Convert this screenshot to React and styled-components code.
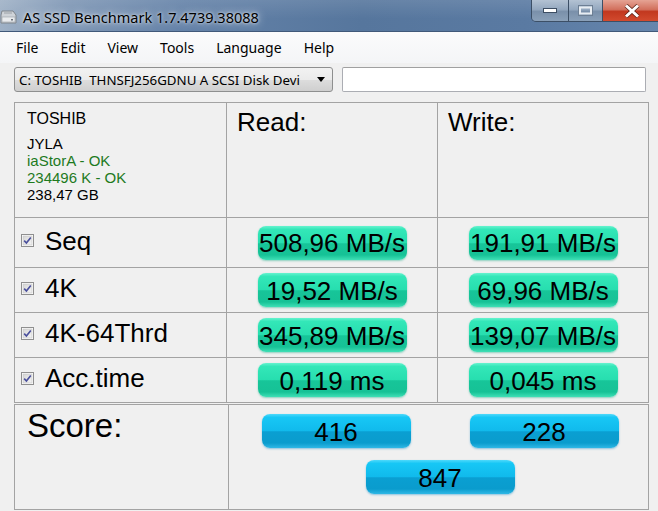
import React from "react";
import styled, { createGlobalStyle } from "styled-components";

const GlobalStyle = createGlobalStyle`
  html, body {
    margin: 0;
    padding: 0;
    overflow: hidden;
    background: #f0f0f0;
  }
`;

const Window = styled.div`
  width: 658px;
  height: 511px;
  display: flex;
  flex-direction: column;
  background: #f0f0f0;
  overflow: hidden;
  font-family: "Liberation Sans", Arial, sans-serif;
  color: #000;
`;

const TitleBar = styled.div`
  height: 31px;
  display: flex;
  align-items: center;
  background:
    linear-gradient(180deg, rgba(255, 255, 255, 0.1), rgba(255, 255, 255, 0) 60%),
    linear-gradient(90deg, #9fb1c6 0%, #7f97b5 10%, #6482a8 28%, #56769d 55%, #5a7aa2 80%, #6686ad 100%);
  border-bottom: 1px solid #41597a;
`;

const AppIcon = styled.svg`
  width: 17px;
  height: 16px;
  margin: 2px 6px 0 0;
  flex: none;
`;

const Title = styled.span`
  font-family: "Noto Sans", sans-serif;
  font-size: 14.5px;
  color: #000;
  text-shadow: 0 0 8px rgba(255, 255, 255, 0.9), 0 0 3px rgba(255, 255, 255, 0.8);
  margin-top: 2px;
`;

const WindowButtons = styled.div`
  margin-left: auto;
  align-self: flex-start;
  display: flex;
  height: 21px;
  border: 1px solid #3c4f66;
  border-top: none;
  border-radius: 0 0 0 5px;
  overflow: hidden;
  margin-right: -4px;
`;

const WinButton = styled.div`
  width: ${(p) => p.$w}px;
  display: flex;
  align-items: center;
  justify-content: center;
  border-left: ${(p) => (p.$first ? "none" : "1px solid #3c4f66")};
  background: ${(p) =>
    p.$close
      ? "linear-gradient(180deg, #e5a394 0%, #d2705d 45%, #c2381f 55%, #d24a2e 100%)"
      : "linear-gradient(180deg, #b3c2d3 0%, #94a8bf 45%, #7a90aa 55%, #8aa0b8 100%)"};
`;

const MenuBar = styled.div`
  height: 31px;
  display: flex;
  align-items: center;
  padding-left: 9px;
  background: linear-gradient(180deg, #fbfbfc, #f4f5f7);
  font-family: "Noto Sans", sans-serif;
  font-size: 14px;
`;

const MenuItem = styled.span`
  padding: 0 7px;
  margin-right: 8px;
`;

const DriveRow = styled.div`
  display: flex;
  gap: 9px;
  padding: 4px 0 0 14px;
`;

const Combo = styled.div`
  width: 313px;
  height: 23px;
  display: flex;
  align-items: center;
  border: 1px solid #8e8f8f;
  border-radius: 3px;
  background: linear-gradient(180deg, #f2f2f2 0%, #ebebeb 50%, #dddddd 51%, #cfcfcf 100%);
  font-family: "Noto Sans", sans-serif;
  font-size: 13.3px;
  white-space: pre;
  padding-left: 4px;
`;

const ComboText = styled.span`
  flex: 1;
  overflow: hidden;
`;

const ComboArrow = styled.span`
  width: 0;
  height: 0;
  border-left: 4px solid transparent;
  border-right: 4px solid transparent;
  border-top: 5px solid #000;
  margin: 0 7px 0 6px;
`;

const TextBox = styled.div`
  width: 302px;
  height: 23px;
  border: 1px solid #abadb3;
  border-top-color: #a0a0a0;
  border-radius: 2px;
  background: #fff;
`;

const ResultGrid = styled.div`
  margin: 10px 0 0 14px;
  display: grid;
  grid-template-columns: 211px 210px 210px;
  grid-template-rows: 114px 49px 44px 44px 44px;
  gap: 1px;
  width: max-content;
  background: #a3a3a3;
  border: 1px solid #a3a3a3;
`;

const Cell = styled.div`
  background: #f0f0f0;
`;

const InfoCell = styled(Cell)`
  padding: 7px 0 0 12px;
  font-size: 15px;
  line-height: 17px;
`;

const DriveName = styled.div`
  font-size: 16px;
  line-height: 18px;
  margin-bottom: 7px;
`;

const InfoLine = styled.div`
  color: ${(p) => (p.$ok ? "#1e7a1e" : "#000")};
`;

const HeadCell = styled(Cell)`
  padding: 4px 0 0 10px;
  font-size: 26px;
`;

const LabelCell = styled(Cell)`
  display: flex;
  align-items: center;
  gap: 11px;
  padding: 0 0 3px 6px;
  font-size: 26px;
`;

const CheckBox = styled.svg`
  width: 13px;
  height: 13px;
  flex: none;
  margin-top: -1px;
`;

const ValueCell = styled(Cell)`
  display: flex;
  align-items: center;
  justify-content: center;
`;

const Pill = styled.div`
  width: 149px;
  height: 34px;
  box-sizing: border-box;
  padding-top: 2px;
  border-radius: 8px;
  display: flex;
  align-items: center;
  justify-content: center;
  white-space: nowrap;
  font-size: 26px;
  background: ${(p) =>
    p.$blue
      ? "linear-gradient(180deg, #4fd9fb 0%, #17c7f5 10%, #10baec 50%, #0a9fd2 52%, #0a9ccd 85%, #2fb8e6 100%)"
      : "linear-gradient(180deg, #66f3cf 0%, #33e7b8 10%, #27deaf 50%, #17c599 52%, #16c296 85%, #3fe0b6 100%)"};
  box-shadow: ${(p) =>
    p.$blue ? "0 1px 2px rgba(20, 140, 200, 0.45)" : "0 1px 2px rgba(20, 170, 130, 0.45)"};
`;

const ScoreBox = styled.div`
  margin: 1px 0 0 14px;
  display: grid;
  grid-template-columns: 213px 419px;
  grid-template-rows: 104px;
  gap: 1px;
  width: max-content;
  background: #a3a3a3;
  border: 1px solid #a3a3a3;
`;

const ScoreLabel = styled(Cell)`
  padding: 2px 0 0 12px;
  font-size: 33px;
`;

const ScoreValues = styled(Cell)`
  display: grid;
  grid-template-columns: 1fr 1fr;
  justify-items: center;
  align-content: start;
  row-gap: 12px;
  padding: 9px 0 0 3px;
`;

const TotalSlot = styled.div`
  grid-column: 1 / -1;
`;

const rows = [
  { name: "Seq", read: "508,96 MB/s", write: "191,91 MB/s" },
  { name: "4K", read: "19,52 MB/s", write: "69,96 MB/s" },
  { name: "4K-64Thrd", read: "345,89 MB/s", write: "139,07 MB/s" },
  { name: "Acc.time", read: "0,119 ms", write: "0,045 ms" },
];

const menu = ["File", "Edit", "View", "Tools", "Language", "Help"];

const Check = () => (
  <CheckBox viewBox="0 0 13 13">
    <defs>
      <linearGradient id="cbg" x1="0" y1="0" x2="1" y2="1">
        <stop offset="0" stopColor="#d6d6d6" />
        <stop offset="1" stopColor="#f4f4f4" />
      </linearGradient>
    </defs>
    <rect x="0.5" y="0.5" width="12" height="12" fill="#fff" stroke="#8f8f8f" />
    <rect x="2" y="2" width="9" height="9" fill="url(#cbg)" stroke="#c4c4c4" strokeWidth="0.6" />
    <path d="M3.2 6.6 L5.4 9 L9.8 3.4" fill="none" stroke="#4a4f9c" strokeWidth="1.6" />
  </CheckBox>
);

export default function App() {
  return (
    <>
      <GlobalStyle />
      <Window>
        <TitleBar>
          <AppIcon viewBox="0 0 17 16">
            <path d="M2 2 h11 l3 4 v8 H1 V6 Z" fill="#cfd3d8" stroke="#7f858c" strokeWidth="1" />
            <rect x="2" y="8" width="13" height="5" fill="#e9ebee" stroke="#9aa0a6" strokeWidth="0.6" />
            <path d="M4 4 h8" stroke="#9aa0a6" strokeWidth="1" />
            <rect x="11" y="10" width="2" height="1.5" fill="#6b7178" />
          </AppIcon>
          <Title>AS SSD Benchmark 1.7.4739.38088</Title>
          <WindowButtons>
            <WinButton $w={36} $first>
              <svg width="14" height="5" viewBox="0 0 14 5">
                <rect x="0.5" y="0.5" width="13" height="4" fill="#fff" stroke="#3d4e63" strokeWidth="1" />
              </svg>
            </WinButton>
            <WinButton $w={33}>
              <svg width="15" height="11" viewBox="0 0 15 11">
                <rect x="0.5" y="0.5" width="14" height="10" fill="none" stroke="#6d7f94" strokeWidth="1" />
                <rect x="2" y="2.5" width="11" height="6" fill="none" stroke="#e8edf2" strokeWidth="2" />
              </svg>
            </WinButton>
            <WinButton $w={58} $close>
              <svg width="16" height="14" viewBox="0 0 16 14">
                <path d="M2 1.5 L14 12.5 M14 1.5 L2 12.5" stroke="#5a2318" strokeWidth="4.4" />
                <path d="M2 1.5 L14 12.5 M14 1.5 L2 12.5" stroke="#fff" strokeWidth="3" />
              </svg>
            </WinButton>
          </WindowButtons>
        </TitleBar>

        <MenuBar>
          {menu.map((m) => (
            <MenuItem key={m}>{m}</MenuItem>
          ))}
        </MenuBar>

        <DriveRow>
          <Combo>
            <ComboText>C: TOSHIB  THNSFJ256GDNU A SCSI Disk Devi</ComboText>
            <ComboArrow />
          </Combo>
          <TextBox />
        </DriveRow>

        <ResultGrid>
          <InfoCell>
            <DriveName>TOSHIB</DriveName>
            <InfoLine>JYLA</InfoLine>
            <InfoLine $ok>iaStorA - OK</InfoLine>
            <InfoLine $ok>234496 K - OK</InfoLine>
            <InfoLine>238,47 GB</InfoLine>
          </InfoCell>
          <HeadCell>Read:</HeadCell>
          <HeadCell>Write:</HeadCell>
          {rows.map((r) => (
            <React.Fragment key={r.name}>
              <LabelCell>
                <Check />
                {r.name}
              </LabelCell>
              <ValueCell>
                <Pill>{r.read}</Pill>
              </ValueCell>
              <ValueCell>
                <Pill>{r.write}</Pill>
              </ValueCell>
            </React.Fragment>
          ))}
        </ResultGrid>

        <ScoreBox>
          <ScoreLabel>Score:</ScoreLabel>
          <ScoreValues>
            <Pill $blue>416</Pill>
            <Pill $blue>228</Pill>
            <TotalSlot>
              <Pill $blue>847</Pill>
            </TotalSlot>
          </ScoreValues>
        </ScoreBox>
      </Window>
    </>
  );
}
